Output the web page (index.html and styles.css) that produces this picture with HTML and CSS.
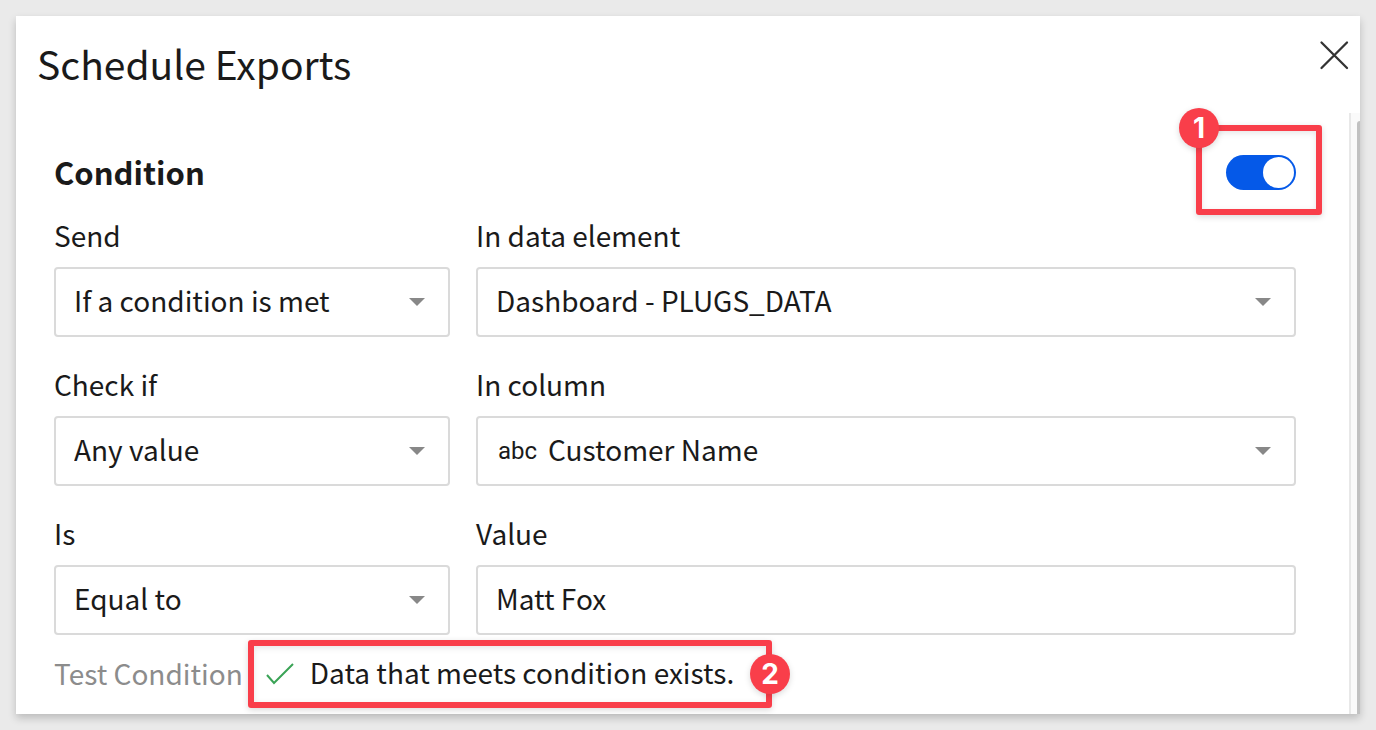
FILE: index.html
```html
<!DOCTYPE html>
<html lang="en">
<head>
<meta charset="utf-8">
<meta name="viewport" content="width=device-width, initial-scale=1">
<title>Schedule Exports</title>
<link rel="stylesheet" href="styles.css">
</head>
<body>
<main class="dialog" role="dialog" aria-labelledby="dialog-title">
  <header class="dialog-header">
    <h1 class="dialog-title" id="dialog-title">Schedule Exports</h1>
    <button class="close" type="button" aria-label="Close">
      <svg width="30" height="30" viewBox="0 0 30 30" fill="none" stroke="#333" stroke-width="2.3" stroke-linecap="round"><path d="M2.500 2.500 28 28M28 2.500 2.500 28"/></svg>
    </button>
  </header>
  <div class="dialog-body">
    <form class="condition">
      <div class="section-head">
        <h2 class="section-title" id="condition-title">Condition</h2>
        <div class="marked">
          <input class="toggle" type="checkbox" role="switch" aria-labelledby="condition-title" checked>
          <span class="callout callout-toggle"></span>
          <span class="badge badge-toggle">1</span>
        </div>
      </div>
      <div class="fields">
        <div class="field">
          <label class="label" for="send">Send</label>
          <div class="control">
            <select class="input" id="send"><option>If a condition is met</option></select>
            <svg class="caret" width="16" height="8" viewBox="0 0 16 8"><path d="M0 0H16L8 8Z" fill="#888"/></svg>
          </div>
        </div>
        <div class="field">
          <label class="label" for="element">In data element</label>
          <div class="control">
            <select class="input" id="element"><option>Dashboard - PLUGS_DATA</option></select>
            <svg class="caret" width="16" height="8" viewBox="0 0 16 8"><path d="M0 0H16L8 8Z" fill="#888"/></svg>
          </div>
        </div>
        <div class="field">
          <label class="label" for="check">Check if</label>
          <div class="control">
            <select class="input" id="check"><option>Any value</option></select>
            <svg class="caret" width="16" height="8" viewBox="0 0 16 8"><path d="M0 0H16L8 8Z" fill="#888"/></svg>
          </div>
        </div>
        <div class="field">
          <label class="label" for="column">In column</label>
          <div class="control">
            <span class="type">abc</span>
            <select class="input input-typed" id="column"><option>Customer Name</option></select>
            <svg class="caret" width="16" height="8" viewBox="0 0 16 8"><path d="M0 0H16L8 8Z" fill="#888"/></svg>
          </div>
        </div>
        <div class="field">
          <label class="label" for="operator">Is</label>
          <div class="control">
            <select class="input" id="operator"><option>Equal to</option></select>
            <svg class="caret" width="16" height="8" viewBox="0 0 16 8"><path d="M0 0H16L8 8Z" fill="#888"/></svg>
          </div>
        </div>
        <div class="field">
          <label class="label" for="value">Value</label>
          <div class="control">
            <input class="input" id="value" type="text" value="Matt Fox">
          </div>
        </div>
      </div>
      <div class="test">
        <button class="test-button" type="button">Test Condition</button>
        <div class="marked result" role="status">
          <svg width="28" height="22" viewBox="0 0 28 22" fill="none" stroke="#3aa356" stroke-width="2"><path d="M1 12 8 20 27 1"/></svg>
          <span class="message">Data that meets condition exists.</span>
          <span class="callout callout-result"></span>
          <span class="badge badge-result">2</span>
        </div>
      </div>
    </form>
    <div class="scrollbar"><div class="thumb"></div></div>
  </div>
</main>
</body>
</html>
```
FILE: styles.css
```css
* { box-sizing: border-box; }

body {
  margin: 0;
  min-height: 100vh;
  padding: 16px;
  display: flex;
  background: #eaeaea;
  color: #1a1a1a;
  font: 28px/36px "Noto Sans CJK JP", "Noto Sans", sans-serif;
}

.dialog {
  flex: 1;
  display: flex;
  flex-direction: column;
  background: #fff;
  box-shadow: 0 4px 8px rgba(0, 0, 0, 0.2);
}

.dialog-header {
  display: flex;
  justify-content: space-between;
  align-items: flex-start;
  padding: 17px 11px 20px 21px;
}

.dialog-title {
  margin: 0;
  font-size: 39px;
  font-weight: 400;
  line-height: 60px;
}

.close {
  display: flex;
  margin-top: 7px;
  padding: 0;
  border: 0;
  background: none;
}

.dialog-body { flex: 1; display: flex; }

.condition { flex: 1; padding: 39px 53px 20px 38px; }

.section-head {
  display: flex;
  justify-content: space-between;
  align-items: center;
  margin-bottom: 25px;
}

.section-title {
  margin: 0;
  font-size: 31px;
  font-weight: 700;
  line-height: 40px;
}

.marked { position: relative; display: flex; }

.toggle {
  appearance: none;
  display: flex;
  justify-content: flex-end;
  width: 70px;
  height: 35px;
  margin: 0;
  padding: 2px;
  border-radius: 18px;
  background: #0559e8;
}

.toggle::before {
  content: "";
  width: 31px;
  border-radius: 50%;
  background: #fff;
}

.fields {
  display: grid;
  grid-template-columns: 396fr 820fr;
  gap: 29px 26px;
}

.field {
  min-width: 0;
  display: flex;
  flex-direction: column;
  gap: 14px;
}

.control { position: relative; display: flex; align-items: center; }

.input {
  appearance: none;
  width: 100%;
  height: 70px;
  padding: 0 18px 4px;
  border: 2px solid #dadada;
  border-radius: 4px;
  background: #fff;
  color: inherit;
  font: inherit;
  line-height: 48px;
}

.input-typed { padding-left: 70px; }

.type {
  position: absolute;
  left: 22px;
  font-family: Roboto, sans-serif;
  font-size: 24px;
}

.caret { position: absolute; right: 25px; pointer-events: none; }

.test { display: flex; align-items: center; margin-top: 19px; }

.test-button {
  padding: 0 0 2px;
  border: 0;
  background: none;
  color: #8c8c8c;
  font: inherit;
}

.result { align-items: center; gap: 16px; margin-left: 23px; }

.message { padding-bottom: 4px; }

.callout {
  position: absolute;
  border: 6px solid #f93e4a;
  border-radius: 3px;
  box-shadow: 0 2px 6px rgba(0, 0, 0, 0.15), inset 0 2px 6px rgba(0, 0, 0, 0.1);
  pointer-events: none;
}

.callout-toggle { inset: -30px -26px -25px -30px; }
.callout-result { inset: -14px -38px -14px -18px; }

.badge {
  position: absolute;
  width: 40px;
  height: 40px;
  border-radius: 50%;
  background: #f93e4a;
  box-shadow: 0 2px 6px rgba(0, 0, 0, 0.15);
  color: #fff;
  font: 700 28px/40px Inter, sans-serif;
  text-align: center;
}

.badge-toggle { top: -47px; left: -47px; }
.badge-result { top: 0; right: -56px; }

.scrollbar {
  display: flex;
  justify-content: flex-end;
  width: 11px;
  padding-top: 8px;
  border-left: 2px solid #e8e8e8;
  background: #fafafa;
}

.thumb { width: 3px; border-radius: 3px 0 0 0; background: #c1c1c1; }
```
